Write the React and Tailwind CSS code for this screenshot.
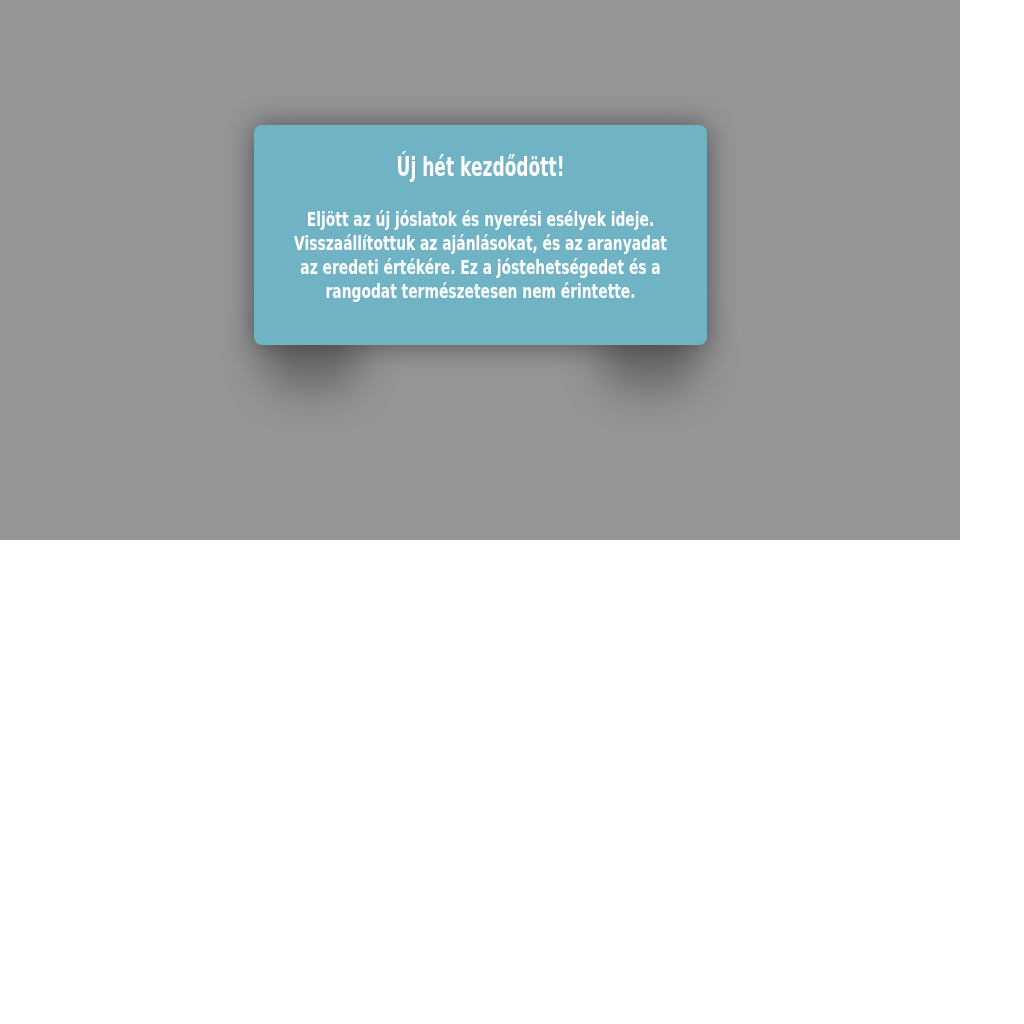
export default function App() {
  const font = { fontFamily: '"DejaVu Sans Condensed", "DejaVu Sans", sans-serif' };
  return (
    <div className="w-[960px] h-[540px] bg-[#959595] flex justify-center pt-[125px]">
      <div className="relative w-[453px] h-[220px]">
        <div className="absolute left-[8px] bottom-[-45px] w-[100px] h-[70px] rounded-full bg-black/30 blur-[20px]"></div>
        <div className="absolute right-[8px] bottom-[-45px] w-[100px] h-[70px] rounded-full bg-black/30 blur-[20px]"></div>
        <div
          className="relative h-full rounded-[8px] bg-[#6fb3c4] shadow-[0_0_28px_rgba(0,0,0,0.45)] text-white pt-[22px]"
          style={font}
        >
          <div className="flex flex-col items-center scale-x-[0.73]">
            <h1 className="whitespace-nowrap text-[26px] font-bold leading-[40px]">Új hét kezdődött!</h1>
          </div>
          <div className="mt-[20px] flex flex-col items-center text-[19px] font-bold leading-[24px] scale-x-[0.81]">
            <div className="whitespace-nowrap">Eljött az új jóslatok és nyerési esélyek ideje.</div>
            <div className="whitespace-nowrap">Visszaállítottuk az ajánlásokat, és az aranyadat</div>
            <div className="whitespace-nowrap">az eredeti értékére. Ez a jóstehetségedet és a</div>
            <div className="whitespace-nowrap">rangodat természetesen nem érintette.</div>
          </div>
        </div>
      </div>
    </div>
  );
}
